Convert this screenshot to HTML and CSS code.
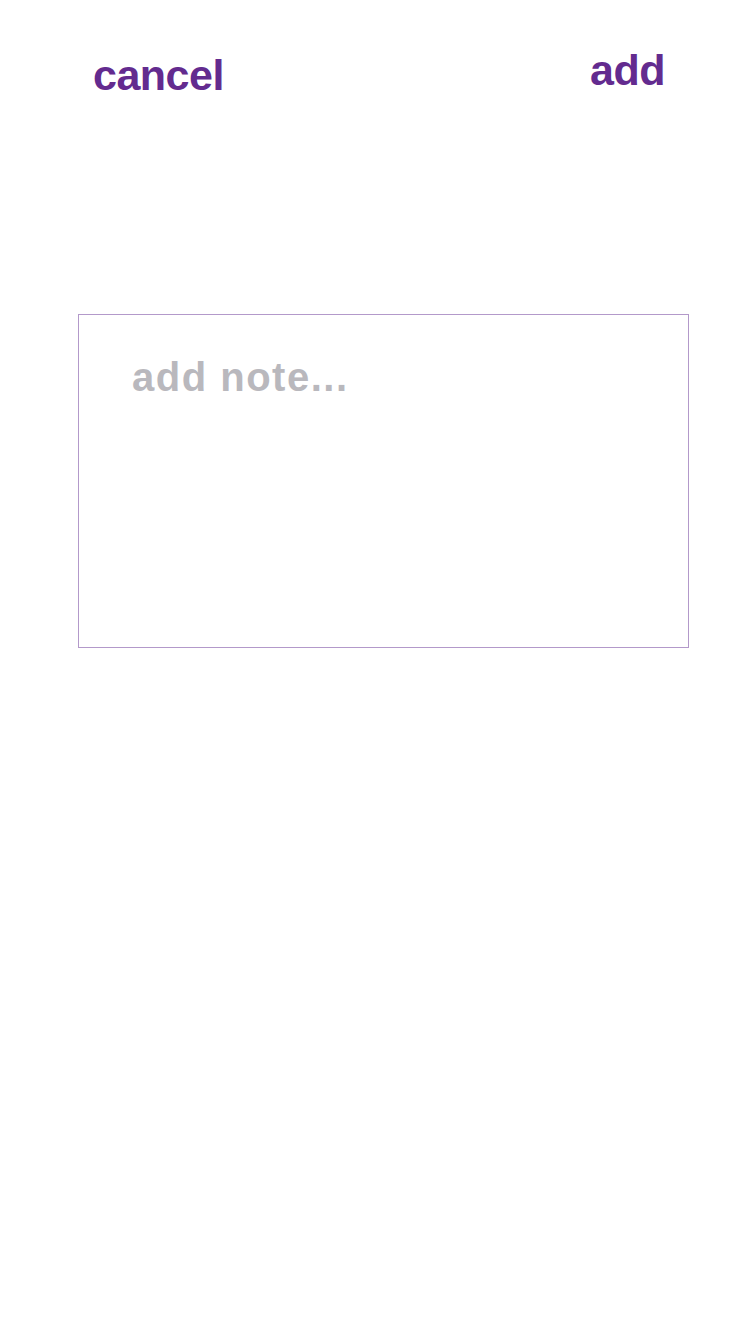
FILE: index.html
```html
<!DOCTYPE html>
<html lang="en">
<head>
<meta charset="utf-8">
<title>Add note</title>
<link rel="stylesheet" href="styles.css">
</head>
<body>
<div class="screen">
  <header class="topbar">
    <button class="action action-cancel" type="button">cancel</button>
    <button class="action action-add" type="button">add</button>
  </header>
  <main class="content">
    <textarea class="note-input" placeholder="add note..."></textarea>
  </main>
</div>
</body>
</html>
```

FILE: styles.css
```css
html, body {
  margin: 0;
  padding: 0;
  background: #ffffff;
}

.screen {
  width: 750px;
  height: 1334px;
  font-family: "Liberation Sans", Arial, sans-serif;
}

.topbar {
  display: flex;
  justify-content: space-between;
  align-items: flex-start;
  padding: 49px 85px 0 93px;
}

.action {
  background: none;
  border: none;
  margin: 0;
  padding: 0;
  font-family: "Liberation Sans", Arial, sans-serif;
  font-size: 43px;
  font-weight: 700;
  letter-spacing: -0.5px;
  line-height: 1;
  color: #632b8f;
  cursor: pointer;
}

.action-cancel {
  padding-top: 5px;
}

.content {
  padding: 217px 61px 0 78px;
}

.note-input {
  display: block;
  box-sizing: border-box;
  width: 100%;
  height: 334px;
  margin: 0;
  padding: 42px 53px;
  border: 1px solid #b399ca;
  border-radius: 0;
  outline: none;
  resize: none;
  font-family: "Liberation Sans", Arial, sans-serif;
  font-size: 40px;
  font-weight: 700;
  letter-spacing: 1.5px;
  line-height: 1;
  color: #333333;
  background: #ffffff;
}

.note-input::placeholder {
  color: #b9b8bd;
  opacity: 1;
}
```
